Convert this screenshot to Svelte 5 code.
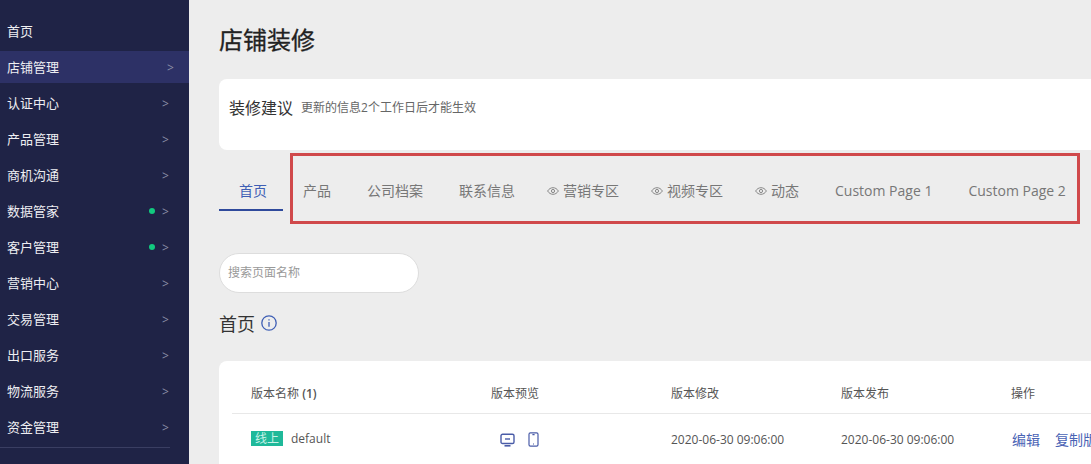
<script>
  const menu = [
    { name: '首页' },
    { name: '店铺管理', arrow: true, active: true },
    { name: '认证中心', arrow: true },
    { name: '产品管理', arrow: true },
    { name: '商机沟通', arrow: true },
    { name: '数据管家', arrow: true, dot: true },
    { name: '客户管理', arrow: true, dot: true },
    { name: '营销中心', arrow: true },
    { name: '交易管理', arrow: true },
    { name: '出口服务', arrow: true },
    { name: '物流服务', arrow: true },
    { name: '资金管理', arrow: true }
  ];

  const tabs = [
    { name: '首页', active: true },
    { name: '产品' },
    { name: '公司档案' },
    { name: '联系信息' },
    { name: '营销专区', eye: true },
    { name: '视频专区', eye: true },
    { name: '动态', eye: true },
    { name: 'Custom Page 1' },
    { name: 'Custom Page 2' }
  ];
</script>

<div class="page">
  <aside class="side">
    {#each menu as item}
      <div class="item" class:active={item.active}>
        <span>{item.name}</span>
        {#if item.dot}<i class="dot"></i>{/if}
        {#if item.arrow}<em class="arrow">&gt;</em>{/if}
      </div>
    {/each}
    <div class="rule"></div>
  </aside>

  <main class="main">
    <h1>店铺装修</h1>

    <section class="tip">
      <strong>装修建议</strong>
      <span>更新的信息2个工作日后才能生效</span>
    </section>

    <nav class="tabs">
      {#each tabs as tab}
        <div class="tab" class:on={tab.active} class:eyed={tab.eye}>
          {#if tab.eye}
            <svg width="12" height="8" viewBox="0 0 12 8" fill="none" stroke="#888" stroke-width="1">
              <path d="M.6 4C2 1.8 3.9.7 6 .7s4 1.1 5.4 3.3C10 6.2 8.1 7.3 6 7.3S2 6.2.6 4z" />
              <circle cx="6" cy="4" r="1.6" />
            </svg>
          {/if}
          <span>{tab.name}</span>
        </div>
      {/each}
      <div class="redbox"></div>
    </nav>

    <div class="search">搜索页面名称</div>

    <div class="subhead">
      <h2>首页</h2>
      <svg width="16" height="16" viewBox="0 0 16 16" fill="none">
        <circle cx="8" cy="8" r="7.2" stroke="#3f5fb5" stroke-width="1.3" />
        <path d="M8 4.2v1.4M8 7v4.8" stroke="#3f5fb5" stroke-width="1.3" />
      </svg>
    </div>

    <section class="table">
      <div class="row head">
        <div>版本名称 <b>(1)</b></div>
        <div>版本预览</div>
        <div>版本修改</div>
        <div>版本发布</div>
        <div>操作</div>
      </div>
      <div class="row body">
        <div class="name"><span class="badge">线上</span><span>default</span></div>
        <div class="preview">
          <svg width="15" height="14" viewBox="0 0 15 14" fill="none" stroke="#4a5ca8" stroke-width="1.4">
            <rect x="1" y="1.2" width="13" height="9.3" rx="1.6" />
            <path d="M5 6h5" />
            <path d="M4.5 12.8h6" stroke-width="1.6" />
          </svg>
          <svg width="11" height="15" viewBox="0 0 11 15" fill="none" stroke="#4a5ca8" stroke-width="1.2">
            <rect x="1" y=".8" width="9" height="13.4" rx="1.4" />
            <path d="M4.4 2.6h2.2M5 12h1" />
          </svg>
        </div>
        <div>2020-06-30 09:06:00</div>
        <div>2020-06-30 09:06:00</div>
        <div class="ops"><a href="#edit">编辑</a><a href="#copy">复制版本</a></div>
      </div>
    </section>
  </main>
</div>

<style>
  :global(body) {
    margin: 0;
    background: #ededed;
  }

  .page {
    display: flex;
    width: 1091px;
    height: 464px;
    overflow: hidden;
    font-family: "Open Sans", "Noto Sans CJK SC", sans-serif;
    color: #333;
  }

  .side {
    flex: none;
    width: 189px;
    padding-top: 12px;
    box-sizing: border-box;
    background: #1f2346;
    position: relative;
  }

  .item {
    display: flex;
    align-items: center;
    height: 36px;
    padding-left: 7px;
    font-size: 13px;
    color: #eeeef2;
  }

  .item.active {
    background: #2d3166;
    box-sizing: border-box;
    height: 32px;
    margin: 3px 0 1px;
    padding-bottom: 2px;
  }

  .dot {
    width: 6px;
    height: 6px;
    margin-left: auto;
    margin-top: 1px;
    border-radius: 50%;
    background: #12c97f;
  }

  .arrow {
    margin-left: auto;
    margin-top: 2px;
    width: 27px;
    font-style: normal;
    font-size: 12px;
    color: #8b8ea6;
  }

  .dot + .arrow {
    margin-left: 7px;
  }

  .active .arrow {
    width: 22px;
  }

  .rule {
    height: 1px;
    width: 170px;
    margin-top: 3px;
    background: #3a3e62;
  }

  .main {
    flex: none;
    width: 902px;
    padding-left: 30px;
    box-sizing: border-box;
  }

  h1 {
    margin: 0;
    padding-top: 24px;
    font-size: 24px;
    line-height: 32px;
    font-weight: 400;
    color: #222;
    -webkit-text-stroke: 0.3px #222;
  }

  .tip {
    display: flex;
    align-items: center;
    gap: 8px;
    height: 71px;
    margin-top: 23px;
    padding: 0 0 16px 10px;
    box-sizing: border-box;
    border-radius: 8px 0 0 8px;
    background: #fff;
  }

  .tip strong {
    font-size: 16px;
    font-weight: 400;
    color: #333;
  }

  .tip span {
    font-size: 12px;
    color: #666;
  }

  .tabs {
    position: relative;
    display: flex;
    gap: 36px;
    height: 61px;
    padding-left: 20px;
    align-items: flex-end;
    white-space: nowrap;
    font-size: 14px;
    color: #777;
  }

  .tab {
    position: relative;
    display: flex;
    align-items: center;
    gap: 4px;
    height: 20px;
    line-height: 20px;
    margin-bottom: 0;
    top: -10px;
  }

  .tab.eyed {
    margin-left: -4px;
  }

  .tab.on {
    color: #3f5fb5;
  }

  .tab.on::after {
    content: "";
    position: absolute;
    left: -20px;
    right: -16px;
    bottom: -10px;
    height: 2px;
    background: #2f4a9c;
  }

  .redbox {
    position: absolute;
    left: 71px;
    top: 3px;
    width: 790px;
    height: 71px;
    box-sizing: border-box;
    border: 3px solid #d0494b;
    pointer-events: none;
  }

  .search {
    width: 200px;
    height: 40px;
    margin-top: 42px;
    padding-left: 8px;
    box-sizing: border-box;
    border: 1px solid #ddd;
    border-radius: 20px;
    background: #fff;
    font-size: 12px;
    line-height: 38px;
    color: #999;
  }

  .subhead {
    display: flex;
    align-items: center;
    gap: 6px;
    margin-top: 17px;
    height: 26px;
  }

  h2 {
    margin: 0;
    font-size: 18px;
    font-weight: 400;
    color: #333;
  }

  .table {
    margin-top: 25px;
    height: 110px;
    padding: 12px 0 0 13px;
    box-sizing: border-box;
    border-radius: 8px 0 0 0;
    background: #fff;
  }

  .row {
    display: grid;
    grid-template-columns: 240px 180px 170px 170px 200px;
    padding-left: 19px;
    font-size: 12px;
    white-space: nowrap;
    align-items: center;
  }

  .head {
    height: 40px;
    border-bottom: 1px solid #e8e8e8;
    color: #555;
  }

  .head b {
    font-weight: 600;
  }

  .body {
    height: 50px;
    color: #555;
  }

  .name {
    display: flex;
    align-items: center;
    gap: 8px;
    position: relative;
    top: -1px;
  }

  .badge {
    width: 32px;
    height: 15px;
    line-height: 15px;
    text-align: center;
    background: #1fb99a;
    color: #c9f2e8;
  }

  .preview {
    display: flex;
    align-items: center;
    gap: 13px;
    padding: 1px 0 0 9px;
  }

  .ops {
    display: flex;
    gap: 15px;
    font-size: 14px;
    padding-left: 1px;
  }

  .ops a {
    color: #4a63b5;
    text-decoration: none;
  }
</style>
